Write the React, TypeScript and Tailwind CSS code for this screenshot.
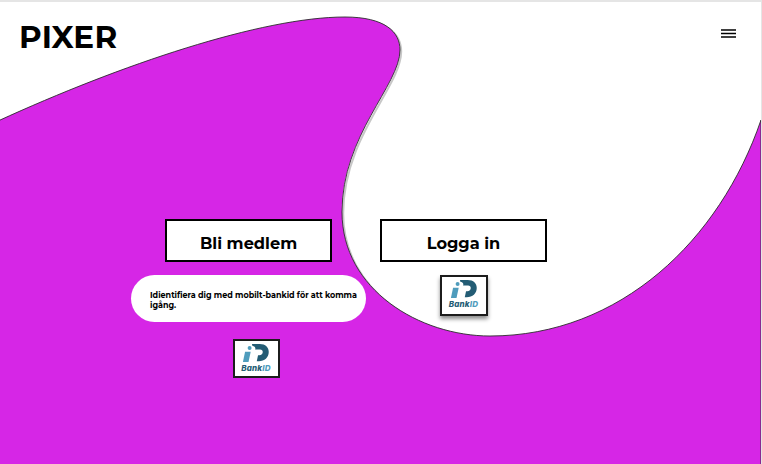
const FONT = "font-['Montserrat','Inter','Liberation_Sans',sans-serif]";

function BankIdBadge({ raised = false, className = "" }: { raised?: boolean; className?: string }) {
  return (
    <div
      className={`flex flex-col items-center border-2 border-[#1c1c1c] bg-white ${raised ? "shadow-[0_3px_4px_rgba(0,0,0,0.45)]" : ""} ${className}`}
    >
      <svg viewBox="0 0 32 22" className="mt-[2px] ml-[1px] h-[20px] w-[29px] blur-[0.3px]">
        <path d="M3.4 9.5h6.2L7.2 21H1z" fill="#4f9cbc" />
        <circle cx="8.4" cy="5.5" r="2.2" fill="#4f9cbc" />
        <path
          d="M11 1h8.5c6.5 0 10 3.6 10 8.8 0 6-4.6 10.2-11 10.2h-2.2l1.4-6.6h1.4c2.4 0 3.8-1.5 3.8-3.5 0-1.6-1-2.7-3-2.7h-5.5c1-1.7 0-3.6-3-4.2z"
          fill="#235c74"
        />
      </svg>
      <span className="mt-[1px] font-['Inter',sans-serif] text-[8px] leading-[9px] font-extrabold tracking-[0.02em] text-[#235c74] italic">
        Bank<span className="text-[#4f9cbc]">ID</span>
      </span>
    </div>
  );
}

function ActionButton({ label }: { label: string }) {
  return (
    <button
      type="button"
      className="flex h-[43px] w-[167px] items-center justify-center border-2 border-black bg-white pt-[6px] text-[16.2px] font-bold text-black"
    >
      {label}
    </button>
  );
}

const CURVE =
  "M-2 121C120 65 262 17 345 17C385 17 400 32 400 50C400 85 342 135 342 212C342 290 420 336 490 336C620 336 720 240 761 120";

export default function App() {
  return (
    <div className={`relative h-[464px] w-[762px] overflow-hidden border-t-2 border-r border-[#e5e5e5] bg-white ${FONT}`}>
      <svg viewBox="0 0 762 464" className="absolute top-[-2px] left-0 h-[464px] w-[762px]">
        <path d={CURVE} fill="none" stroke="#000" strokeOpacity="0.22" strokeWidth="2" transform="translate(1.2 1.6)" />
        <path d={`${CURVE}V470H-2Z`} fill="#d626e6" />
        <path d={`${CURVE}V464`} fill="none" stroke="#2b2b2b" strokeWidth="0.9" />
      </svg>

      <div className="relative">
        <header className="flex items-start justify-between pt-[20px] pr-[25px] pl-[19px]">
          <h1 className="text-[31px] leading-[30px] font-bold tracking-[0.01em] text-black">PIXER</h1>
          <svg viewBox="0 0 15 10" className="mt-[6px] h-[10px] w-[15px]">
            <path d="M0 2h15M0 5.5h15M0 9h15" stroke="#000" strokeWidth="1.5" />
          </svg>
        </header>

        <main className="mt-[167px] flex items-start pl-[131px]">
          <div className="flex w-[235px] flex-col items-center">
            <ActionButton label="Bli medlem" />
            <p className="mt-[13px] flex h-[47px] w-full items-center rounded-[24px] bg-white pt-[3px] pr-[8px] pl-[19px] text-[8px] leading-[10.5px] font-bold text-black">
              Idientifiera dig med mobilt-bankid för att komma igång.
            </p>
            <BankIdBadge className="mt-[17px] ml-[15px] h-[39px] w-[47px]" />
          </div>

          <div className="ml-[14px] flex w-[167px] flex-col items-center">
            <ActionButton label="Logga in" />
            <BankIdBadge raised className="mt-[13px] h-[41px] w-[48px]" />
          </div>
        </main>
      </div>
    </div>
  );
}
